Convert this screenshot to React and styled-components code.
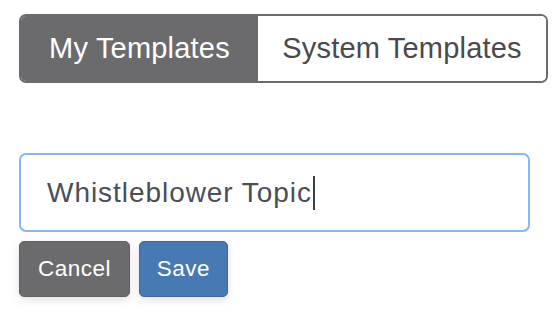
import React from "react"
import styled, { createGlobalStyle } from "styled-components"

const GlobalStyle = createGlobalStyle`
  html, body {
    margin: 0;
    padding: 0;
    background: #ffffff;
  }
  body {
    font-family: "Liberation Sans", Arial, sans-serif;
  }
`

const Page = styled.div`
  width: 560px;
  height: 321px;
  padding: 14px 0 0 19px;
  box-sizing: border-box;
  display: flex;
  flex-direction: column;
`

const Segmented = styled.div`
  display: flex;
  width: 529px;
  height: 69px;
  box-sizing: border-box;
  border: 2px solid #6b6b6d;
  border-radius: 7px;
  overflow: hidden;
`

const Segment = styled.button`
  border: none;
  margin: 0;
  padding: 0;
  height: 100%;
  width: ${(p) => p.$width}px;
  flex: ${(p) => (p.$fill ? "1" : "none")};
  background: ${(p) => (p.$active ? "#6b6b6d" : "#ffffff")};
  color: ${(p) => (p.$active ? "#ffffff" : "#4a4a4c")};
  font-family: "Liberation Sans", Arial, sans-serif;
  font-size: 29px;
  letter-spacing: 0.2px;
  display: flex;
  align-items: center;
  justify-content: center;
  cursor: pointer;
`

const Field = styled.div`
  margin-top: 70px;
  width: 511px;
  height: 79px;
  box-sizing: border-box;
  border: 2px solid #86b6f3;
  border-radius: 7px;
  display: flex;
  align-items: center;
  padding-left: 26px;
  font-size: 28px;
  letter-spacing: 0.95px;
  color: #4a4f56;
`

const Caret = styled.span`
  display: inline-block;
  width: 2px;
  height: 34px;
  margin-left: 1px;
  background: #3a3e44;
`

const Actions = styled.div`
  display: flex;
  gap: 9px;
  margin-top: 9px;
`

const Button = styled.button`
  height: 56px;
  width: ${(p) => p.$width}px;
  box-sizing: border-box;
  border-radius: 5px;
  border: 1px solid ${(p) => (p.$primary ? "#3b69a0" : "#616163")};
  background: ${(p) => (p.$primary ? "#4779b3" : "#6b6b6d")};
  color: #ffffff;
  font-family: "Liberation Sans", Arial, sans-serif;
  font-size: 22.5px;
  letter-spacing: 0.5px;
  padding: 0;
  box-shadow: 0 3px 8px rgba(0, 0, 0, 0.12);
  cursor: pointer;
`

export default function App() {
  return (
    <>
      <GlobalStyle />
      <Page>
        <Segmented>
          <Segment $active $width={237}>
            My Templates
          </Segment>
          <Segment $fill>System Templates</Segment>
        </Segmented>
        <Field>
          Whistleblower Topic
          <Caret />
        </Field>
        <Actions>
          <Button $width={111}>Cancel</Button>
          <Button $primary $width={89}>
            Save
          </Button>
        </Actions>
      </Page>
    </>
  )
}
